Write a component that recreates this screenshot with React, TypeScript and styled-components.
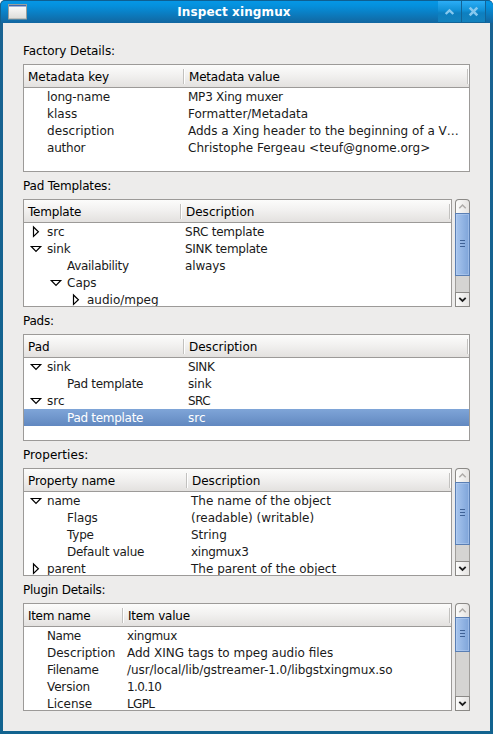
import React from "react";
import styled, { createGlobalStyle, css } from "styled-components";

const Global = createGlobalStyle`
  html, body { margin: 0; padding: 0; }
  body { background: #ffffff; }
`;

const Frame = styled.div`
  box-sizing: border-box;
  width: 493px;
  height: 734px;
  display: flex;
  flex-direction: column;
  padding: 0 3px 3px;
  background: linear-gradient(to bottom, #1a6392 0px, #156390 300px, #12638f 100%);
  border-radius: 5px 5px 0 0;
  overflow: hidden;
  font-family: "DejaVu Sans", sans-serif;
  font-size: 12px;
  color: #000;
`;

const TitleBar = styled.div`
  flex: none;
  box-sizing: border-box;
  height: 23px;
  margin: 0 -3px;
  padding: 0 7px 0 7px;
  display: flex;
  align-items: center;
  border-top: 1px solid #0e5f91;
  border-left: 1px solid #12628f;
  border-radius: 5px 5px 0 0;
  background: linear-gradient(to bottom, #0597e6 0, #0590dc 5px, #1266a0 22px);
`;

const Title = styled.div`
  flex: 1;
  text-align: center;
  padding-left: 3px;
  font-weight: bold;
  font-size: 12px;
  line-height: 22px;
  letter-spacing: 0.12px;
  color: #fff;
  white-space: pre;
`;

const TitleButtons = styled.div`
  flex: none;
  display: flex;
  gap: 1px;
  height: 22px;
  padding-right: 1px;
  background: #126397;
`;

const TitleButton = styled.div`
  width: 23px;
  height: 21px;
  display: flex;
  align-items: center;
  justify-content: center;
  background: linear-gradient(to bottom, #2badf6 0, #1292d8 9px, #0d7fc0 12px, #1482bd 21px);
`;

const Content = styled.div`
  flex: 1;
  min-height: 0;
  padding: 14px 20px 0;
  background: #edeceb;
`;

const Label = styled.div<{ $tracking?: number }>`
  box-sizing: border-box;
  height: 27px;
  padding-top: 1px;
  line-height: 27px;
  letter-spacing: ${(p) => p.$tracking ?? 0}px;
  white-space: pre;
`;

const Row = styled.div<{ $h: number }>`
  display: flex;
  gap: 3px;
  height: ${(p) => p.$h}px;
`;

const Tree = styled.div`
  flex: 1;
  min-width: 0;
  box-sizing: border-box;
  border: 1px solid #9c9a98;
  background: #fff;
  overflow: hidden;
`;

const Header = styled.div<{ $col: number }>`
  box-sizing: border-box;
  height: 23px;
  display: grid;
  grid-template-columns: ${(p) => p.$col}px 1fr;
  align-items: center;
  border-bottom: 1px solid #9c9a98;
  background: linear-gradient(to bottom, #fcfcfb 0, #f2f1f0 10px, #e3e1df 22px);
`;

const HeadCell = styled.div<{ $tracking?: number }>`
  box-sizing: border-box;
  height: 15px;
  margin-top: 1px;
  line-height: 17px;
  padding-left: 4px;
  border-right: 1px solid #c2c1bf;
  box-shadow: 1px 0 0 #fff;
  letter-spacing: ${(p) => p.$tracking ?? 0}px;
  white-space: pre;

  &:last-child {
    margin-right: 1px;
    padding-left: 5px;
  }
`;

const Line = styled.div<{ $col: number; $selected?: boolean }>`
  height: 17px;
  line-height: 19px;
  display: grid;
  grid-template-columns: ${(p) => p.$col}px 1fr;
  color: #1a1a1a;
  ${(p) =>
    p.$selected &&
    css`
      color: #fff;
      background: linear-gradient(to bottom, #7fa5d8, #6188c0);
    `}
`;

const Key = styled.div<{ $depth: number }>`
  display: flex;
  height: 17px;
  padding-left: ${(p) => 3 + p.$depth * 20}px;
`;

const Expander = styled.div`
  width: 20px;
  height: 17px;
  display: flex;
  align-items: center;
`;

const Text = styled.span<{ $tracking?: number }>`
  letter-spacing: ${(p) => p.$tracking ?? 0}px;
  white-space: pre;
`;

const Value = styled.div`
  height: 17px;
  padding-left: 3px;
  min-width: 0;
`;

const Bar = styled.div`
  flex: none;
  width: 15px;
  display: flex;
  flex-direction: column;
  box-sizing: border-box;
`;

const Stepper = styled.div<{ $up?: boolean }>`
  flex: none;
  box-sizing: border-box;
  height: ${(p) => (p.$up ? 14 : 15)}px;
  border: 1px solid #8b8986;
  border-bottom-width: ${(p) => (p.$up ? 0 : 1)}px;
  border-radius: ${(p) => (p.$up ? "4px 4px 0 0" : "0")};
  background: linear-gradient(to right, #fcfcfb, #e5e3e1);
  display: flex;
  align-items: center;
  justify-content: center;
`;

const Thumb = styled.div<{ $h: number }>`
  flex: none;
  box-sizing: border-box;
  height: ${(p) => p.$h}px;
  padding-bottom: 2px;
  border: 1px solid #5a7fb4;
  background: linear-gradient(to right, #a7c5ee, #7ea4d9);
  box-shadow: inset 0 0 0 1px rgba(190, 213, 243, 0.45);
  display: flex;
  flex-direction: column;
  align-items: center;
  justify-content: center;
  gap: 2px;
`;

const Grip = styled.div`
  width: 5px;
  height: 1px;
  background: #3f6296;
`;

const Trough = styled.div`
  flex: 1;
  border: solid #a09e9b;
  border-width: 0 1px;
  background: #d5d4d2;
`;

function Arrow({ open }: { open: boolean }) {
  return (
    <svg width="17" height="17" viewBox="0 0 17 17">
      {open ? (
        <path d="M4.3 6.5H13.7L9 11.4Z" fill="#fff" stroke="#000" strokeWidth="1.2" />
      ) : (
        <path d="M6.5 4V13.4L11.4 8.7Z" fill="#fff" stroke="#000" strokeWidth="1.2" />
      )}
    </svg>
  );
}

/* Letter spacing, in pixels, that evens out the width of individual strings. */
const tracking: Record<string, number> = {
  "Factory Details:": -0.08,
  "Pad Templates:": -0.18,
  "Pads:": -0.25,
  "Properties:": 0.06,
  "Plugin Details:": -0.26,
  "Metadata key": -0.04,
  "Metadata value": -0.2,
  Template: -0.2,
  "Property name": -0.13,
  "Item name": -0.32,
  "Item value": -0.2,
  "long-name": -0.15,
  description: 0.07,
  author: -0.22,
  "MP3 Xing muxer": -0.23,
  "SRC template": -0.22,
  "SINK template": -0.28,
  Availability: -0.3,
  always: -0.15,
  sink: -0.15,
  "Pad template": -0.29,
  SINK: -0.4,
  SRC: -0.5,
  name: -0.2,
  Flags: -0.15,
  Type: -0.2,
  "Default value": -0.25,
  parent: -0.15,
  xingmux3: -0.27,
  "(readable) (writable)": -0.03,
  Name: -0.45,
  Filename: -0.32,
  Version: -0.15,
  xingmux: -0.3,
  "/usr/local/lib/gstreamer-1.0/libgstxingmux.so": -0.06,
  "1.0.10": -0.65,
  LGPL: -0.65,
};

interface Item {
  key: string;
  value?: string;
  depth?: number;
  open?: boolean;
  selected?: boolean;
}

interface Section {
  label: string;
  height: number;
  col: number;
  head: [string, string];
  thumb?: number;
  items: Item[];
}

const sections: Section[] = [
  {
    label: "Factory Details:",
    height: 108,
    col: 161,
    head: ["Metadata key", "Metadata value"],
    items: [
      { key: "long-name", value: "MP3 Xing muxer" },
      { key: "klass", value: "Formatter/Metadata" },
      { key: "description", value: "Adds a Xing header to the beginning of a V…" },
      { key: "author", value: "Christophe Fergeau <teuf@gnome.org>" },
    ],
  },
  {
    label: "Pad Templates:",
    height: 108,
    col: 158,
    head: ["Template", "Description"],
    thumb: 63,
    items: [
      { key: "src", value: "SRC template", open: false },
      { key: "sink", value: "SINK template", open: true },
      { key: "Availability", value: "always", depth: 1 },
      { key: "Caps", depth: 1, open: true },
      { key: "audio/mpeg", depth: 2, open: false },
    ],
  },
  {
    label: "Pads:",
    height: 107,
    col: 161,
    head: ["Pad", "Description"],
    items: [
      { key: "sink", value: "SINK", open: true },
      { key: "Pad template", value: "sink", depth: 1 },
      { key: "src", value: "SRC", open: true },
      { key: "Pad template", value: "src", depth: 1, selected: true },
    ],
  },
  {
    label: "Properties:",
    height: 108,
    col: 164,
    head: ["Property name", "Description"],
    thumb: 63,
    items: [
      { key: "name", value: "The name of the object", open: true },
      { key: "Flags", value: "(readable) (writable)", depth: 1 },
      { key: "Type", value: "String", depth: 1 },
      { key: "Default value", value: "xingmux3", depth: 1 },
      { key: "parent", value: "The parent of the object", open: false },
    ],
  },
  {
    label: "Plugin Details:",
    height: 108,
    col: 100,
    head: ["Item name", "Item value"],
    thumb: 35,
    items: [
      { key: "Name", value: "xingmux" },
      { key: "Description", value: "Add XING tags to mpeg audio files" },
      { key: "Filename", value: "/usr/local/lib/gstreamer-1.0/libgstxingmux.so" },
      { key: "Version", value: "1.0.10" },
      { key: "License", value: "LGPL" },
    ],
  },
];

function Scrollbar({ thumb }: { thumb: number }) {
  return (
    <Bar>
      <Stepper $up>
        <svg width="9" height="7" viewBox="0 0 9 7">
          <path d="M1.3 5.2L4.5 2L7.7 5.2" fill="none" stroke="#aeaba8" strokeWidth="1.5" />
        </svg>
      </Stepper>
      <Thumb $h={thumb}>
        <Grip />
        <Grip />
        <Grip />
      </Thumb>
      <Trough />
      <Stepper>
        <svg width="9" height="7" viewBox="0 0 9 7">
          <path d="M1.3 1.8L4.5 5L7.7 1.8" fill="none" stroke="#1c1c1c" strokeWidth="1.8" />
        </svg>
      </Stepper>
    </Bar>
  );
}

function WindowIcon() {
  return (
    <svg width="19" height="16" viewBox="0 0 19 16">
      <defs>
        <linearGradient id="pane" x1="0" y1="0" x2="0" y2="1">
          <stop offset="0" stopColor="#ffffff" />
          <stop offset="1" stopColor="#dcdcd8" />
        </linearGradient>
      </defs>
      <rect x="0.5" y="0.5" width="18" height="14.5" fill="url(#pane)" stroke="#9a9f9c" />
      <rect x="1" y="1" width="17" height="1" fill="#3f67ac" />
      <rect x="1" y="2" width="17" height="1" fill="#9fb3d8" />
    </svg>
  );
}

export default function App() {
  return (
    <>
      <Global />
      <Frame>
        <TitleBar>
          <WindowIcon />
          <Title>Inspect xingmux</Title>
          <TitleButtons>
            <TitleButton>
              <svg width="11" height="11" viewBox="0 0 11 11">
                <path d="M1.7 8L5.5 4.4L9.3 8" fill="none" stroke="#86c8ee" strokeWidth="2.4" />
              </svg>
            </TitleButton>
            <TitleButton>
              <svg width="11" height="11" viewBox="0 0 11 11">
                <path d="M1.7 1.7L9.3 9.3M9.3 1.7L1.7 9.3" fill="none" stroke="#86c8ee" strokeWidth="2.6" />
              </svg>
            </TitleButton>
          </TitleButtons>
        </TitleBar>
        <Content>
          {sections.map((s) => (
            <React.Fragment key={s.label}>
              <Label $tracking={tracking[s.label]}>{s.label}</Label>
              <Row $h={s.height}>
                <Tree>
                  <Header $col={s.col - 1}>
                    {s.head.map((h) => (
                      <HeadCell key={h} $tracking={tracking[h]}>
                        {h}
                      </HeadCell>
                    ))}
                  </Header>
                  {s.items.map((it, i) => (
                    <Line key={i} $col={s.col} $selected={it.selected}>
                      <Key $depth={it.depth ?? 0}>
                        <Expander>{it.open !== undefined && <Arrow open={it.open} />}</Expander>
                        <Text $tracking={tracking[it.key]}>{it.key}</Text>
                      </Key>
                      <Value>
                        <Text $tracking={tracking[it.value ?? ""]}>{it.value}</Text>
                      </Value>
                    </Line>
                  ))}
                </Tree>
                {s.thumb !== undefined && <Scrollbar thumb={s.thumb} />}
              </Row>
            </React.Fragment>
          ))}
        </Content>
      </Frame>
    </>
  );
}
